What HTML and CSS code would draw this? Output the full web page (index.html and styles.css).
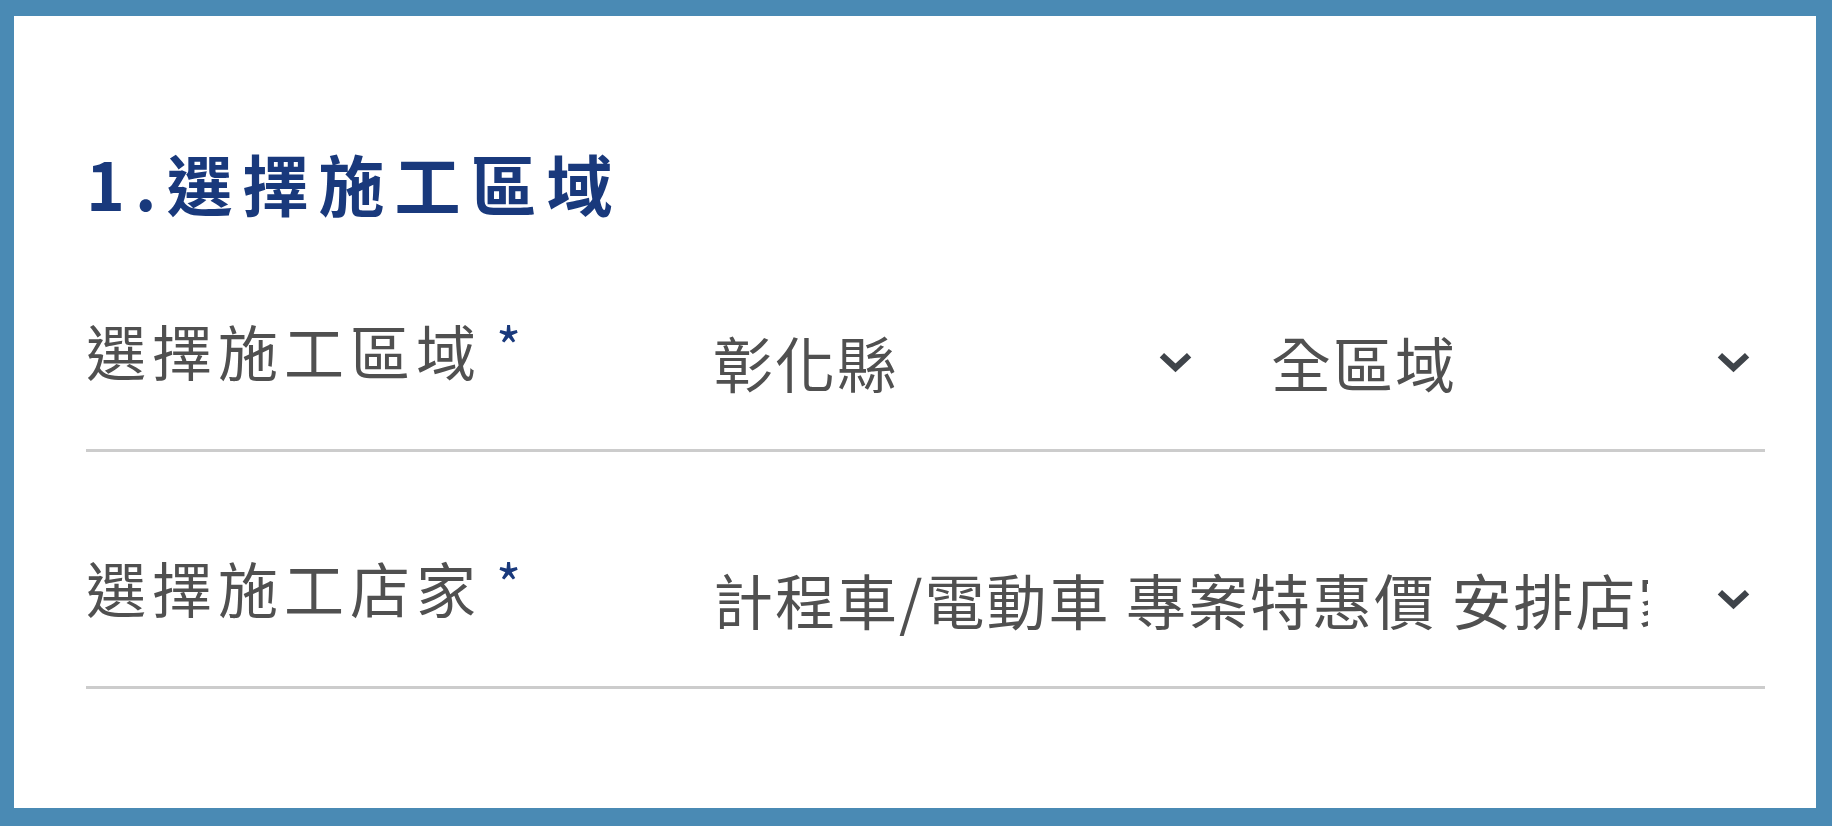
FILE: index.html
```html
<!DOCTYPE html>
<html lang="zh-Hant">
<head>
  <meta charset="UTF-8">
  <title>選擇施工區域</title>
  <link rel="stylesheet" href="styles.css">
</head>
<body>

  <div class="panel">
    <h2 class="step-title">1.選擇施工區域</h2>

    <div class="form-row">
      <label class="form-label">選擇施工區域<span class="req">*</span></label>
      <div class="fields">
        <div class="select">
          <span class="select-text">彰化縣</span>
          <svg class="chevron" viewBox="0 0 36 22"><polyline points="4,4 18,17 32,4"/></svg>
        </div>
        <div class="select">
          <span class="select-text">全區域</span>
          <svg class="chevron" viewBox="0 0 36 22"><polyline points="4,4 18,17 32,4"/></svg>
        </div>
      </div>
    </div>

    <div class="form-row">
      <label class="form-label">選擇施工店家<span class="req">*</span></label>
      <div class="fields">
        <div class="select">
          <span class="select-text">計程車/電動車 專案特惠價 安排店家施工</span>
          <svg class="chevron" viewBox="0 0 36 22"><polyline points="4,4 18,17 32,4"/></svg>
        </div>
      </div>
    </div>
  </div>

</body>
</html>
```

FILE: styles.css
```css
html, body { height: 100%; }
body { margin: 0; padding: 16px 16px 18px 14px; box-sizing: border-box; background: #4a8ab4; font-family: "Noto Sans CJK TC", "Noto Sans", sans-serif; }
.panel { height: 100%; box-sizing: border-box; background: #fff; padding: 133px 51px 0 72px; }

.step-title { margin: 0; font-size: 66px; line-height: 1; font-weight: 700; letter-spacing: 10px; color: #19397c; }

.form-row { display: grid; grid-template-columns: 614px 1fr; padding: 90px 0 30px; border-bottom: 3px solid #cccccc; }
.form-label { font-size: 60px; line-height: 90px; letter-spacing: 6px; color: #505050; white-space: nowrap; }
.req { display: inline-block; margin-left: 14px; font-size: 54px; line-height: 1; vertical-align: 8px; color: #19397c; }

.fields { display: flex; gap: 51px; min-width: 0; }
.select { flex: 1; min-width: 0; display: flex; align-items: center; gap: 68px; padding: 12px 14px 12px 13px; }
.select-text { flex: 1; min-width: 0; overflow: hidden; white-space: nowrap; font-size: 60px; line-height: 90px; letter-spacing: 2px; color: #505050; }
.chevron { width: 35px; height: 22px; flex: none; fill: none; stroke: #3f444a; stroke-width: 6.5; }
```
